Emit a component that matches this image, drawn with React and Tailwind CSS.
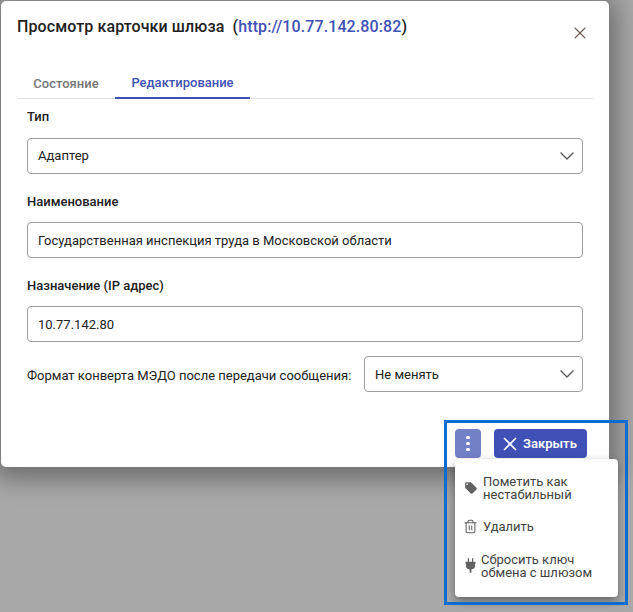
import React from "react";
import { X, ChevronDown, Trash2 } from "lucide-react";

function Field({ label, value, select, shift }) {
  return (
    <div className="flex flex-col">
      <div className={"h-[16px] mb-[13px] text-[13px] leading-[16px] font-medium text-[#212121] " + (shift ? "pt-[1px]" : "")}>{label}</div>
      <div className={"h-[36px] border border-[#9e9e9e] rounded-[4px] bg-white flex items-center justify-between pl-[10px] pr-[3px] text-[13px] text-[#212121] " + (shift ? "pt-[2px]" : "")}>
        <span>{value}</span>
        {select && <ChevronDown size={24} strokeWidth={1.4} className="text-[#555]" />}
      </div>
    </div>
  );
}

function TagIcon() {
  return (
    <svg width="14" height="14" viewBox="0 0 24 24" fill="#616161"><path d="M21.41 11.58l-9-9C12.05 2.22 11.55 2 11 2H4c-1.1 0-2 .9-2 2v7c0 .55.22 1.05.59 1.42l9 9c.36.36.86.58 1.41.58s1.05-.22 1.41-.59l7-7c.37-.36.59-.86.59-1.41s-.23-1.06-.59-1.42zM5.500 7C4.67 7 4 6.33 4 5.500S4.67 4 5.500 4 7 4.67 7 5.500 6.33 7 5.500 7z"/></svg>
  );
}
function PlugIcon() {
  return (
    <svg width="11" height="15" viewBox="0 0 12 16" fill="#616161"><path d="M3 0h1.400v4H3zM7.600 0H9v4H7.600zM0.500 4h11v2H11v2.500A3.500 3.500 0 0 1 7 12v4H5v-4a3.500 3.500 0 0 1-4-3.500V6H.5z"/></svg>
  );
}

export default function App() {
  return (
    <div className="relative w-[633px] h-[612px] overflow-hidden bg-[#a8a8a8] font-['Roboto',sans-serif]">
      <div className="ml-[1px] mt-[1px] w-[608px] h-[466px] bg-white rounded-[5px] shadow-[0_4px_24px_8px_rgba(0,0,0,0.35)] flex flex-col pl-[16px]">
        <div className="flex items-start justify-between pt-[16px] pr-[19px] h-[69px]">
          <div className="text-[16px] leading-[20px] font-medium tracking-[0.1px] text-[#212121]">
            Просмотр карточки шлюза&nbsp; (<span className="text-[#3f51b5]">http://10.77.142.80:82</span>)
          </div>
          <X size={20} strokeWidth={1.3} className="mt-[6px] text-[#6d5c55]" />
        </div>
        <div className="mr-[16px] border-b border-[#e0e0e0] h-[29px] flex text-[13px] font-medium">
          <div className="w-[98px] h-[28px] flex items-center justify-center text-[#757575]">Состояние</div>
          <div className="w-[135px] h-[29px] pb-[2px] flex items-center justify-center text-[#3f51b5] border-b-2 border-[#3f51b5]">Редактирование</div>
        </div>
        <div className="flex flex-col gap-[19px] pl-[10px] pr-[10px] mr-[16px] pt-[10px]">
          <Field label="Тип" value="Адаптер" select />
          <Field label="Наименование" value="Государственная инспекция труда в Московской области" shift />
          <Field label="Назначение (IP адрес)" value="10.77.142.80" shift />
        </div>
        <div className="flex items-center justify-between pl-[10px] pr-[10px] mr-[16px] mt-[14px]">
          <span className="text-[13px] text-[#212121] pt-[3px]">Формат конверта МЭДО после передачи сообщения:</span>
          <div className="w-[219px] h-[36px] border border-[#9e9e9e] rounded-[4px] flex items-center justify-between pl-[10px] pr-[3px] text-[13px] text-[#212121]">
            <span className="pt-[2px]">Не менять</span>
            <ChevronDown size={24} strokeWidth={1.4} className="text-[#555]" />
          </div>
        </div>
      </div>

      <div className="absolute left-[455px] top-[429px] flex gap-[13px]">
        <div className="w-[26px] h-[29px] rounded-[4px] bg-[#7280c6] flex flex-col items-center justify-center gap-[2.5px]">
          <span className="w-[3.5px] h-[3.5px] rounded-full bg-white" />
          <span className="w-[3.5px] h-[3.5px] rounded-full bg-white" />
          <span className="w-[3.5px] h-[3.5px] rounded-full bg-white" />
        </div>
        <div className="w-[93px] h-[29px] rounded-[4px] bg-[#3f51b5] text-white flex items-center justify-start pl-[5px] gap-[2px] text-[13px] font-semibold">
          <X size={22} strokeWidth={1.8} />
          <span>Закрыть</span>
        </div>
      </div>

      <div className="absolute left-[455px] top-[459px] w-[163px] h-[138px] bg-white rounded-[4px] shadow-[0_4px_10px_rgba(0,0,0,0.4)] text-[13px] leading-[13px] text-[#424242]">
        <div className="flex items-center h-[57px] pl-[9px] pt-[1px]">
          <span className="w-[19px] flex"><TagIcon /></span>
          <span>Пометить как<br />нестабильный</span>
        </div>
        <div className="flex items-center h-[20px] pl-[8px]">
          <Trash2 size={15} strokeWidth={1.7} className="text-[#616161] mr-[5px]" />
          <span>Удалить</span>
        </div>
        <div className="flex items-center h-[59px] pl-[10px]">
          <span className="w-[16px] flex"><PlugIcon /></span>
          <span>Сбросить ключ<br />обмена с шлюзом</span>
        </div>
      </div>

      <div className="absolute left-[444px] top-[420px] w-[184px] h-[185px] border-[3px] border-[#0a6ed1]" />
    </div>
  );
}
